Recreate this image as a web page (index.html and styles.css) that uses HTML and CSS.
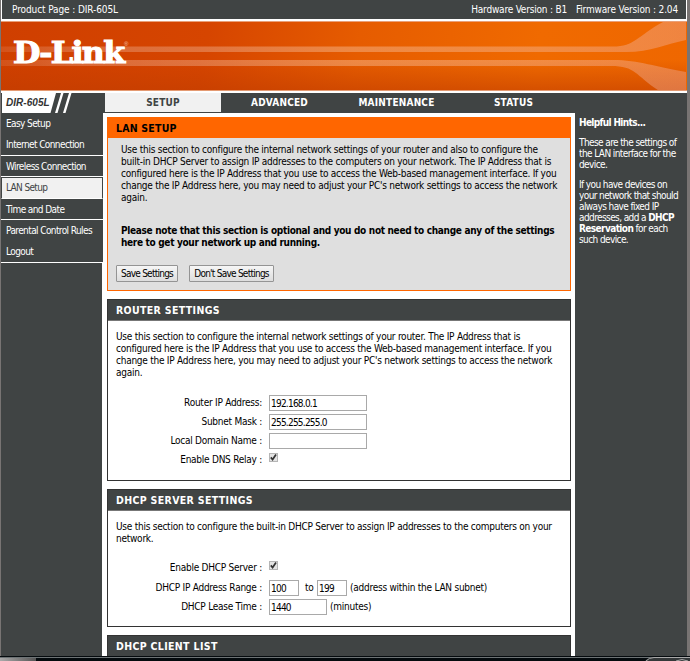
FILE: index.html
```
<!DOCTYPE html>
<html lang="en">
<head>
<meta charset="utf-8">
<title>D-Link DIR-605L | LAN Setup</title>
<link rel="stylesheet" href="styles.css">
</head>
<body>
<div class="page">
  <div class="topbar">
    <span class="t-product">Product Page : DIR-605L</span>
    <span class="t-hw">Hardware Version : B1</span>
    <span class="t-fw">Firmware Version : 2.04</span>
  </div>
  <div class="banner">
    <svg class="rays" width="685" height="70" viewBox="0 0 685 70">
      <defs>
        <linearGradient id="ray" gradientUnits="userSpaceOnUse" x1="0" x2="685" y1="0" y2="0"><stop offset="0" stop-color="#fff" stop-opacity=".1"/><stop offset=".12" stop-color="#fff" stop-opacity=".21"/><stop offset=".5" stop-color="#ffe0c8" stop-opacity=".34"/><stop offset="1" stop-color="#f0b0a0" stop-opacity=".4"/></linearGradient>
        <linearGradient id="shade" x1="0" y1="0" x2="0" y2="1"><stop offset="0" stop-color="#c03c00" stop-opacity="0"/><stop offset="1" stop-color="#c03c00" stop-opacity=".6"/></linearGradient>
      </defs>
      <rect y="38" width="685" height="32" fill="url(#shade)"/>
      <path d="M0 24.500H612C634 24.500 636 14 662 0H685V18C665 22 650 30 625 30H0Z" fill="url(#ray)"/>
      <path d="M0 38H612C638 38 655 45 685 50V70H660C634 54 636 44 610 44H0Z" fill="url(#ray)"/>
    </svg>
    <span class="logo">D-Link</span><span class="reg">®</span>
  </div>
  <div class="nav">
    <div class="model">
      <svg width="102" height="20" viewBox="0 0 102 20"><path d="M1 0H55L49.500 20H1ZM60 0H62.500L56.500 20H54ZM68 0H70.500L64.500 20H62Z" fill="#fff"/></svg>
      <span class="model-name">DIR-605L</span>
    </div>
    <div class="tab active">SETUP</div>
    <div class="tab">ADVANCED</div>
    <div class="tab">MAINTENANCE</div>
    <div class="tab">STATUS</div>
  </div>
  <div class="columns">
    <div class="side">
      <ul class="menu">
        <li>Easy Setup</li>
        <li class="rule">Internet Connection</li>
        <li class="rule">Wireless Connection</li>
        <li class="rule current">LAN Setup</li>
        <li class="rule">Time and Date</li>
        <li>Parental Control Rules</li>
        <li class="rule">Logout</li>
      </ul>
      <div class="side-fill"></div>
    </div>
    <div class="main">
      <section class="panel intro">
        <h2>LAN SETUP</h2>
        <p class="copy">Use this section to configure the internal network settings of your router and also to configure the<br>built-in DHCP Server to assign IP addresses to the computers on your network. The IP Address that is<br>configured here is the IP Address that you use to access the Web-based management interface. If you<br>change the IP Address here, you may need to adjust your PC's network settings to access the network<br>again.</p>
        <p class="copy strong">Please note that this section is optional and you do not need to change any of the settings<br>here to get your network up and running.</p>
        <div class="actions"><button class="b-save">Save Settings</button><button class="b-dont">Don't Save Settings</button></div>
      </section>
      <section class="panel router">
        <h2>ROUTER SETTINGS</h2>
        <p class="copy">Use this section to configure the internal network settings of your router. The IP Address that is<br>configured here is the IP Address that you use to access the Web-based management interface. If you<br>change the IP Address here, you may need to adjust your PC's network settings to access the network<br>again.</p>
        <div class="form">
          <div class="row"><label>Router IP Address:</label><span class="field wide">192.168.0.1</span></div>
          <div class="row"><label>Subnet Mask :</label><span class="field wide">255.255.255.0</span></div>
          <div class="row"><label>Local Domain Name :</label><span class="field wide"></span></div>
          <div class="row"><label>Enable DNS Relay :</label><span class="check"><svg width="9" height="9" viewBox="0 0 9 9"><path d="M1.800 4.400L3.600 6.500L7 1.500" fill="none" stroke="#333" stroke-width="1.700"/></svg></span></div>
        </div>
      </section>
      <section class="panel dhcp">
        <h2>DHCP SERVER SETTINGS</h2>
        <p class="copy">Use this section to configure the built-in DHCP Server to assign IP addresses to the computers on your<br>network.</p>
        <div class="form">
          <div class="row first"><label>Enable DHCP Server :</label><span class="check"><svg width="9" height="9" viewBox="0 0 9 9"><path d="M1.800 4.400L3.600 6.500L7 1.500" fill="none" stroke="#333" stroke-width="1.700"/></svg></span></div>
          <div class="row"><label>DHCP IP Address Range :</label><span class="field small">100</span><span class="to">to</span><span class="field small">199</span><span class="note">(address within the LAN subnet)</span></div>
          <div class="row"><label>DHCP Lease Time :</label><span class="field medium">1440</span><span class="note">(minutes)</span></div>
        </div>
      </section>
      <section class="panel clients"><h2>DHCP CLIENT LIST</h2></section>
    </div>
    <aside class="hints">
      <h3>Helpful Hints...</h3>
      <p>These are the settings of<br>the LAN interface for the<br>device.</p>
      <p>If you have devices on<br>your network that should<br>always have fixed IP<br>addresses, add a <b>DHCP</b><br><b>Reservation</b> for each<br>such device.</p>
    </aside>
  </div>
</div>
<div class="taskbar">
  <svg width="690" height="5" viewBox="0 0 690 5"><defs><linearGradient id="tb"><stop offset="0" stop-color="#aaa"/><stop offset="1" stop-color="#555"/></linearGradient></defs><rect y="1" width="690" height="1" fill="#6d7375"/><rect y="2" width="36" height="3" fill="url(#tb)"/><path d="M645 5Q648 1 654 1.500H690V5Z" fill="#343839"/><path d="M646 5Q649 1.500 654 1.500H690M676 5Q682 2 688 5" fill="none" stroke="#a8a8a8"/></svg>
</div>
</body>
</html>
```
FILE: styles.css
```
* { box-sizing: border-box; }
body {
  margin: 0;
  width: 690px;
  height: 661px;
  overflow: hidden;
  background: #787473;
  font-family: "DejaVu Sans Condensed", "DejaVu Sans", sans-serif;
  font-stretch: condensed;
  font-size: 10px;
  line-height: 12px;
  letter-spacing: -.25px;
  color: #000;
}
h2, h3, p, ul { margin: 0; padding: 0; }
.page {
  width: 686px;
  height: 656px;
  margin-left: 1px;
  background: #fff;
  overflow: hidden;
}
.topbar {
  display: flex;
  height: 19px;
  margin: 0 1px;
  padding: 4px 8px 0 10px;
  background: #404444;
  color: #fff;
  white-space: nowrap;
  letter-spacing: -.16px;
}
.t-product { flex: 1; letter-spacing: -.1px; }
.t-hw { margin-right: 9px; letter-spacing: -.2px; }
.banner {
  position: relative;
  height: 70px;
  margin-top: 2px;
  border-top: 1px solid #e9a078;
  border-bottom: 1px solid #e49a72;
  background: linear-gradient(97deg, #cf3f00 0%, #d64500 30%, #e65c00 52%, #f06a00 78%, #ef6700 100%);
  overflow: hidden;
}
.rays { display: block; }
.logo {
  position: absolute;
  left: 12px;
  top: 13px;
  font: bold 29px/36px "DejaVu Serif", serif;
  letter-spacing: -1.5px;
  color: #fff;
  -webkit-text-stroke: 1.1px #fff;
  transform: scaleX(1.09);
  transform-origin: 0 0;
}
.reg {
  position: absolute;
  left: 123px;
  top: 18px;
  font: 6px/8px "Liberation Sans", sans-serif;
  color: #f3c4ae;
}
.nav {
  display: flex;
  height: 20px;
  margin-top: 2px;
  background: #404444;
}
.model { position: relative; width: 104px; height: 20px; }
.model svg { display: block; }
.model-name {
  position: absolute;
  left: 5px;
  top: 4px;
  font: italic bold 10px/12px "Liberation Sans", sans-serif;
  letter-spacing: .05px;
  color: #333;
}
.tab {
  width: 117px;
  height: 19px;
  padding-top: 4px;
  text-align: center;
  font-weight: bold;
  color: #fff;
  letter-spacing: .2px;
}
.tab.active { width: 116px; background: #f1f1f1; color: #404444; letter-spacing: .2px; }
.columns { display: flex; height: 543px; }
.side { width: 102px; display: flex; flex-direction: column; flex: none; }
.menu { list-style: none; background: #404444; letter-spacing: -.6px; }
.menu li { height: 21px; padding: 5px 0 0 5px; color: #fff; white-space: nowrap; }
.menu .rule { height: 21.500px; border-bottom: 1px solid #fff; }
.menu .current { background: #f1f1f1; color: #404444; border: 1px solid #404444; border-bottom-color: #fff; padding: 4px 0 0 4px; letter-spacing: -.65px; }
.side-fill { flex: 1; width: 101px; background: #404444; }
.main { width: 472px; flex: none; padding: 4px 4px 0; }
.panel { border: 1px solid #333; margin-bottom: 8px; }
.panel h2 {
  height: 21px;
  padding: 4px 0 0 8px;
  background: #404444;
  border-bottom: 1px solid #777;
  color: #fff;
  font-size: 10.500px;
  line-height: 12px;
  letter-spacing: .34px;
}
.copy { padding: 10px 0 0 8px; white-space: nowrap; }
.intro { height: 174px; background: #dfdfdf; border-color: #f60; }
.intro h2 { height: 20px; background: #f60; border: 0; color: #000; letter-spacing: .2px; }
.intro .copy { padding: 6px 0 0 13px; }
.intro .strong { padding-top: 21px; font-weight: bold; letter-spacing: -.32px; }
.actions { display: flex; gap: 11px; padding: 16px 0 0 8px; }
button {
  height: 17px;
  padding: 0;
  border: 1px solid #949494;
  border-radius: 1px;
  background: linear-gradient(#f6f6f6, #ddd);
  font: inherit;
  font-size: 10px;
  letter-spacing: -.75px;
  white-space: nowrap;
  color: #000;
}
.b-save { width: 62px; }
.b-dont { width: 85px; }
.router { height: 182px; }
.form { padding-top: 16px; }
.row { display: flex; height: 19px; white-space: nowrap; }
.row label { width: 154px; margin-right: 7px; padding-top: 2px; text-align: right; }
.field { height: 16px; border: 1px solid #a9a9a9; padding: 2px 0 0 1px; line-height: 12px; font-size: 10px; letter-spacing: -.77px; }
.wide { width: 98px; }
.small { width: 30px; }
.medium { width: 58px; }
.check { width: 9px; height: 9px; margin-top: 1px; background: #e4e4e4; border: 1px solid #b5b5b5; }
.check svg { display: block; margin: -1px; }
.to { width: 18px; padding: 2px 0 0 6px; }
.note { padding: 2px 0 0 3px; }
.dhcp { height: 138px; }
.dhcp .form { padding-top: 15px; }
.dhcp .first { height: 20px; }
.clients { height: 40px; }
.hints { flex: 1; background: #404444; color: #fff; padding: 4px 0 0 4px; line-height: 11px; white-space: nowrap; letter-spacing: -.6px; }
.hints h3 { font-size: 10px; line-height: 11px; letter-spacing: -.65px; }
.hints p { margin-top: 9px; }
.taskbar { height: 5px; background: #050b0e; }
.taskbar svg { display: block; }
```
